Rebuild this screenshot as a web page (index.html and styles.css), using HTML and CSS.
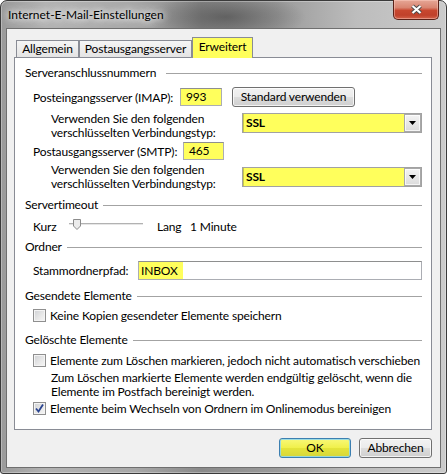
FILE: index.html
```html
<!DOCTYPE html>
<html lang="de">
<head>
<meta charset="utf-8">
<title>Internet-E-Mail-Einstellungen</title>
<link rel="stylesheet" href="styles.css">
</head>
<body>
<div class="window">
  <header class="titlebar">
    <span class="title">Internet-E-Mail-Einstellungen</span>
    <span class="close" aria-label="Schließen">
      <svg width="13" height="11" viewBox="0 0 13 11"><path class="x-outline" d="M2.5 2 L10.5 9 M10.5 2 L2.5 9"/><path class="x-fill" d="M2.5 2 L10.5 9 M10.5 2 L2.5 9"/></svg>
    </span>
  </header>
  <main class="client">
    <nav class="tabs">
      <span class="tab tab-general">Allgemein</span>
      <span class="tab tab-smtp">Postausgangsserver</span>
      <span class="tab tab-advanced active">Erweitert</span>
    </nav>
    <section class="panel">
      <div class="group-title g-ports"><span>Serveranschlussnummern</span></div>
      <div class="row r-imap">
        <span class="label l-imap">Posteingangsserver (IMAP):</span>
        <span class="textbox port p-imap">993</span>
        <span class="button b-default">Standard verwenden</span>
      </div>
      <div class="enc e-1">
        <span class="enc-label">Verwenden Sie den folgenden<br>verschlüsselten Verbindungstyp:</span>
        <span class="combo"><span class="combo-value">SSL</span><span class="combo-btn"><svg width="7" height="4" viewBox="0 0 7 4"><path d="M0 0 H7 L3.5 4 Z"/></svg></span></span>
      </div>
      <div class="row r-smtp">
        <span class="label l-smtp">Postausgangsserver (SMTP):</span>
        <span class="textbox port p-smtp">465</span>
      </div>
      <div class="enc e-2">
        <span class="enc-label">Verwenden Sie den folgenden<br>verschlüsselten Verbindungstyp:</span>
        <span class="combo"><span class="combo-value">SSL</span><span class="combo-btn"><svg width="7" height="4" viewBox="0 0 7 4"><path d="M0 0 H7 L3.5 4 Z"/></svg></span></span>
      </div>

      <div class="group-title g-timeout"><span>Servertimeout</span></div>
      <div class="row r-timeout">
        <span class="l-short">Kurz</span>
        <span class="slider">
          <span class="track"></span>
          <svg class="thumb" width="8" height="11" viewBox="0 0 8 11"><path d="M0.5 0.5 H7.5 V7 L4 10.5 L0.5 7 Z"/></svg>
        </span>
        <span class="l-long">Lang</span>
        <span class="l-value">1 Minute</span>
      </div>

      <div class="group-title g-folder"><span>Ordner</span></div>
      <div class="row r-folder">
        <span class="label l-folder">Stammordnerpfad:</span>
        <span class="textbox path"><span class="hl">INBOX</span></span>
      </div>

      <div class="group-title g-sent"><span>Gesendete Elemente</span></div>
      <label class="check c-nocopy"><span class="box"></span><span>Keine Kopien gesendeter Elemente speichern</span></label>

      <div class="group-title g-deleted"><span>Gelöschte Elemente</span></div>
      <label class="check c-mark"><span class="box"></span><span>Elemente zum Löschen markieren, jedoch nicht automatisch verschieben</span></label>
      <p class="note">Zum Löschen markierte Elemente werden endgültig gelöscht, wenn die<br>Elemente im Postfach bereinigt werden.</p>
      <label class="check c-purge"><span class="box checked"><svg width="11" height="11" viewBox="0 0 11 11"><path d="M2 5.5 L4.5 8.5 L9 1.5"/></svg></span><span>Elemente beim Wechseln von Ordnern im Onlinemodus bereinigen</span></label>
    </section>
    <footer class="buttons">
      <span class="button b-ok">OK</span>
      <span class="button b-cancel">Abbrechen</span>
    </footer>
  </main>
</div>
</body>
</html>
```

FILE: styles.css
```css
* { box-sizing: border-box; }
html, body { margin: 0; padding: 0; }
body {
  width: 447px;
  height: 474px;
  overflow: hidden;
  background: #ffffff;
  font-family: "Segoe UI", Lato, "Noto Sans", sans-serif;
  font-size: 12px;
  color: #000;
}

/* ---------- window frame ---------- */
.window {
  width: 447px;
  height: 474px;
  border: 1px solid #3a3a3a;
  border-radius: 7px 7px 3px 3px;
  padding: 0 5px 5px 5px;
  display: flex;
  flex-direction: column;
  background:
    radial-gradient(ellipse 80px 24px at 225px 16px, rgba(60,60,60,0.55), rgba(60,60,60,0) 100%),
    linear-gradient(to right, #9a9a9a 0%, #b3b3b3 10%, #a8a8a8 30%, #8a8a8a 45%, #9a9a9a 62%, #bdbdbd 80%, #cbcbcb 100%);
  box-shadow: inset 0 0 0 1px rgba(255,255,255,0.3);
}

.titlebar {
  height: 27px;
  display: flex;
  align-items: flex-start;
  flex: none;
}
.title {
  padding: 6px 0 0 2px;
  line-height: 16px;
  color: #000;
  text-shadow: 0 0 6px rgba(255,255,255,0.95), 0 0 10px rgba(255,255,255,0.85), 0 0 14px rgba(255,255,255,0.7);
}
.close {
  margin-left: auto;
  margin-right: 2px;
  margin-top: -1px;
  width: 46px;
  height: 20px;
  border: 1px solid #5a2118;
  border-top: none;
  border-radius: 0 0 5px 5px;
  background: linear-gradient(#e6a796 0%, #d98571 40%, #c8472f 55%, #c0412b 80%, #d3624a 100%);
  box-shadow: inset 0 0 0 1px rgba(255,210,200,0.45);
  display: flex;
  align-items: center;
  justify-content: center;
}
.close svg { display: block; margin-top: -1px; }
.x-outline { stroke: #4a4a4a; stroke-width: 4; fill: none; }
.x-fill { stroke: #ffffff; stroke-width: 2.2; fill: none; }

/* ---------- client ---------- */
.client {
  flex: 1;
  background: #f0f0f0;
  border: 1px solid #6f6f6f;
  padding: 8px 8px 0 7px;
  display: flex;
  flex-direction: column;
  letter-spacing: -0.15px;
}

.tabs {
  display: flex;
  align-items: flex-end;
  height: 20px;
  padding-left: 2px;
  position: relative;
  z-index: 1;
  flex: none;
}
.tab {
  height: 17px;
  border: 1px solid #898c95;
  border-bottom: none;
  background: linear-gradient(#f5f5f5, #e4e4e4);
  text-align: center;
  line-height: 15px;
  white-space: nowrap;
}
.tab-general { width: 63px; }
.tab-smtp { width: 113px; }
.tab-advanced { width: 61px; }
.tab.active {
  height: 21px;
  margin-bottom: -1px;
  background: #ffff5c;
  line-height: 17px;
}

.panel {
  height: 373px;
  flex: none;
  background: #ffffff;
  border: 1px solid #898c95;
  padding: 7px 9px 0 10px;
  display: flex;
  flex-direction: column;
}

.group-title {
  display: flex;
  align-items: center;
  gap: 5px;
  height: 16px;
  line-height: 16px;
  white-space: nowrap;
  flex: none;
}
.group-title::after {
  content: "";
  flex: 1;
  height: 1px;
  background: #a3a3a3;
  margin-top: 1px;
}
.g-ports::after { margin-left: 5px; }

.row {
  display: flex;
  align-items: center;
  height: 20px;
  padding-left: 8px;
  white-space: nowrap;
  flex: none;
}

.r-imap { margin-top: 6px; }
.e-1 { margin-top: 6px; }
.r-smtp { margin-top: 5px; }
.e-2 { margin-top: 6px; }
.g-timeout { margin-top: 7px; }
.r-timeout { margin-top: 5px; height: 16px; }
.g-folder { margin-top: 5px; }
.r-folder { margin-top: 5px; }
.g-sent { margin-top: 8px; }
.c-nocopy { margin-top: 3px; }
.g-deleted { margin-top: 9px; }
.c-mark { margin-top: 4px; }
.note { margin: 3px 0 0 0; }
.c-purge { margin-top: 1px; }

.l-imap { width: 147px; }
.l-smtp { width: 150px; }
.l-folder { width: 105px; }

.textbox {
  height: 18px;
  border: 1px solid #abadb3;
  border-top-color: #8e8f8f;
  background: #ffff5c;
  line-height: 16px;
  padding-left: 5px;
}
.p-imap { width: 42px; }
.p-smtp { width: 41px; }
.path {
  flex: 1;
  height: 19px;
  background: #ffffff;
  padding-left: 0;
  display: flex;
}
.hl {
  background: #ffff5c;
  padding: 0 5px 0 2px;
  line-height: 17px;
}

/* ---------- buttons ---------- */
.button {
  display: inline-flex;
  align-items: center;
  justify-content: center;
  height: 20px;
  border: 1px solid #707070;
  border-radius: 3px;
  background: linear-gradient(#f2f2f2 0%, #ebebeb 50%, #dddddd 51%, #cfcfcf 100%);
  box-shadow: inset 0 0 0 1px rgba(255,255,255,0.75);
  white-space: nowrap;
  line-height: 16px;
}
.b-default { width: 123px; margin-left: 10px; }

.buttons {
  display: flex;
  justify-content: flex-end;
  gap: 8px;
  margin-top: 8px;
  flex: none;
}
.b-ok {
  width: 72px;
  border-color: #3c7fb1;
  background: linear-gradient(#f8f878 0%, #f0f04a 50%, #e4e43a 51%, #d6d63a 100%);
  box-shadow: inset 0 0 0 1px rgba(140,215,245,0.85);
}
.b-cancel { width: 73px; }

/* ---------- encryption combo ---------- */
.enc {
  display: flex;
  align-items: flex-start;
  height: 23px;
  padding-left: 26px;
  flex: none;
}
.enc-label {
  width: 191px;
  line-height: 14.5px;
  margin-top: -1.5px;
  white-space: nowrap;
}
.e-2 .enc-label { margin-top: -4.5px; }
.combo {
  flex: 1;
  height: 20px;
  border: 1px solid #a2a2a2;
  background: #ffff5c;
  box-shadow: inset 1px 0 0 #c9c94a;
  display: flex;
}
.combo-value {
  flex: 1;
  padding-left: 3px;
  line-height: 18px;
  font-weight: bold;
}
.combo-btn {
  width: 17px;
  border: 1px solid #a9a9a9;
  background: linear-gradient(#f4f4f4, #dcdcdc);
  box-shadow: inset 0 0 0 1px rgba(255,255,255,0.7);
  display: flex;
  align-items: center;
  justify-content: center;
}
.combo-btn svg { display: block; }
.combo-btn path { fill: #000; }

/* ---------- timeout slider ---------- */
.l-short { width: 36px; }
.slider {
  position: relative;
  width: 74px;
  height: 16px;
}
.track {
  position: absolute;
  left: 0;
  right: 0;
  top: 5px;
  height: 3px;
  border-top: 1px solid #b2b2b2;
  border-bottom: 1px solid #ffffff;
  background: #e6e6e6;
}
.thumb {
  position: absolute;
  left: 4px;
  top: 1px;
}
.thumb path { fill: #ececec; stroke: #8b8b8b; stroke-width: 1; }
.l-long { margin-left: 14px; width: 33px; }

/* ---------- checkboxes ---------- */
.check {
  display: flex;
  align-items: center;
  gap: 4px;
  height: 16px;
  padding-left: 8px;
  white-space: nowrap;
  flex: none;
}
.box {
  width: 13px;
  height: 13px;
  border: 1px solid #8f8f8f;
  background: linear-gradient(135deg, #cfd1d4 0%, #e9e9e9 60%, #f6f6f6 100%);
  box-shadow: inset 0 0 0 1px #f4f4f4;
  flex: none;
  display: flex;
  align-items: center;
  justify-content: center;
}
.box svg { display: block; }
.box path { fill: none; stroke: #2a4490; stroke-width: 1.8; }

.note {
  padding-left: 26px;
  line-height: 14px;
  height: 28px;
  white-space: nowrap;
  flex: none;
}
```
